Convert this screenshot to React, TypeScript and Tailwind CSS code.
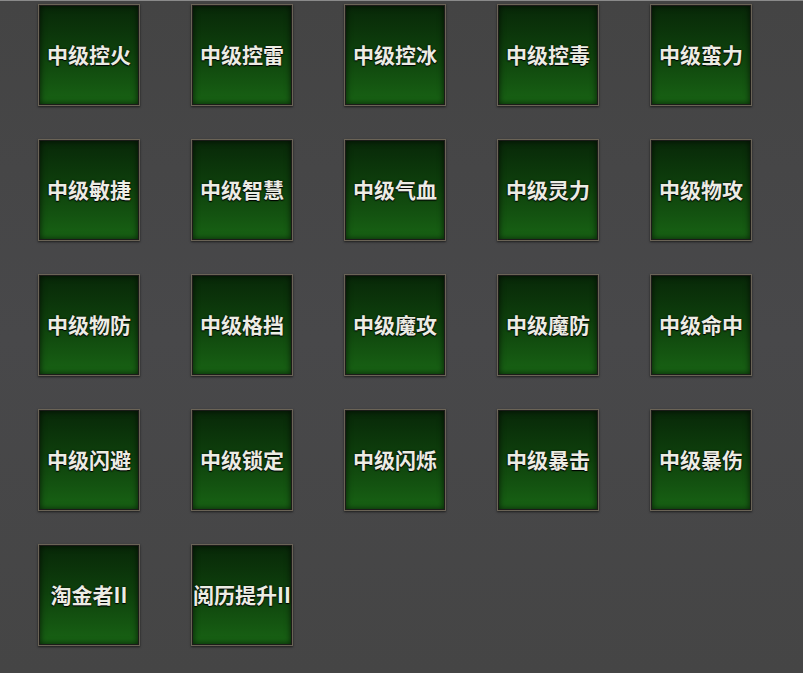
const skills = [
  "中级控火", "中级控雷", "中级控冰", "中级控毒", "中级蛮力",
  "中级敏捷", "中级智慧", "中级气血", "中级灵力", "中级物攻",
  "中级物防", "中级格挡", "中级魔攻", "中级魔防", "中级命中",
  "中级闪避", "中级锁定", "中级闪烁", "中级暴击", "中级暴伤",
  "淘金者II", "阅历提升II",
];

function SkillTile({ name }: { name: string }) {
  return (
    <div className="size-[102px] border border-[#6a6356] bg-[#1b1b18] p-px shadow-[0_1px_2px_rgba(0,0,0,0.6)]">
      <div className="flex size-full items-center justify-center bg-[linear-gradient(180deg,#082808_0%,#0e3f0c_45%,#186314_100%)] shadow-[inset_0_0_6px_rgba(0,0,0,0.7)]">
        <span className="whitespace-nowrap text-[21px] font-bold text-[#ecece4] [text-shadow:0_0_2px_#000,0_1px_1px_#000]">
          {name}
        </span>
      </div>
    </div>
  );
}

export default function App() {
  return (
    <div className="h-[673px] w-[803px] overflow-hidden border-t border-[#8a8a8a] bg-[linear-gradient(180deg,#444444_0%,#48484a_50%,#454545_100%)] font-['Noto_Sans_CJK_SC','Noto_Sans',sans-serif]">
      <div className="grid grid-cols-[repeat(5,102px)] gap-x-[51px] gap-y-[33px] pl-[38px] pt-[3px]">
        {skills.map((s) => (
          <SkillTile key={s} name={s} />
        ))}
      </div>
    </div>
  );
}
